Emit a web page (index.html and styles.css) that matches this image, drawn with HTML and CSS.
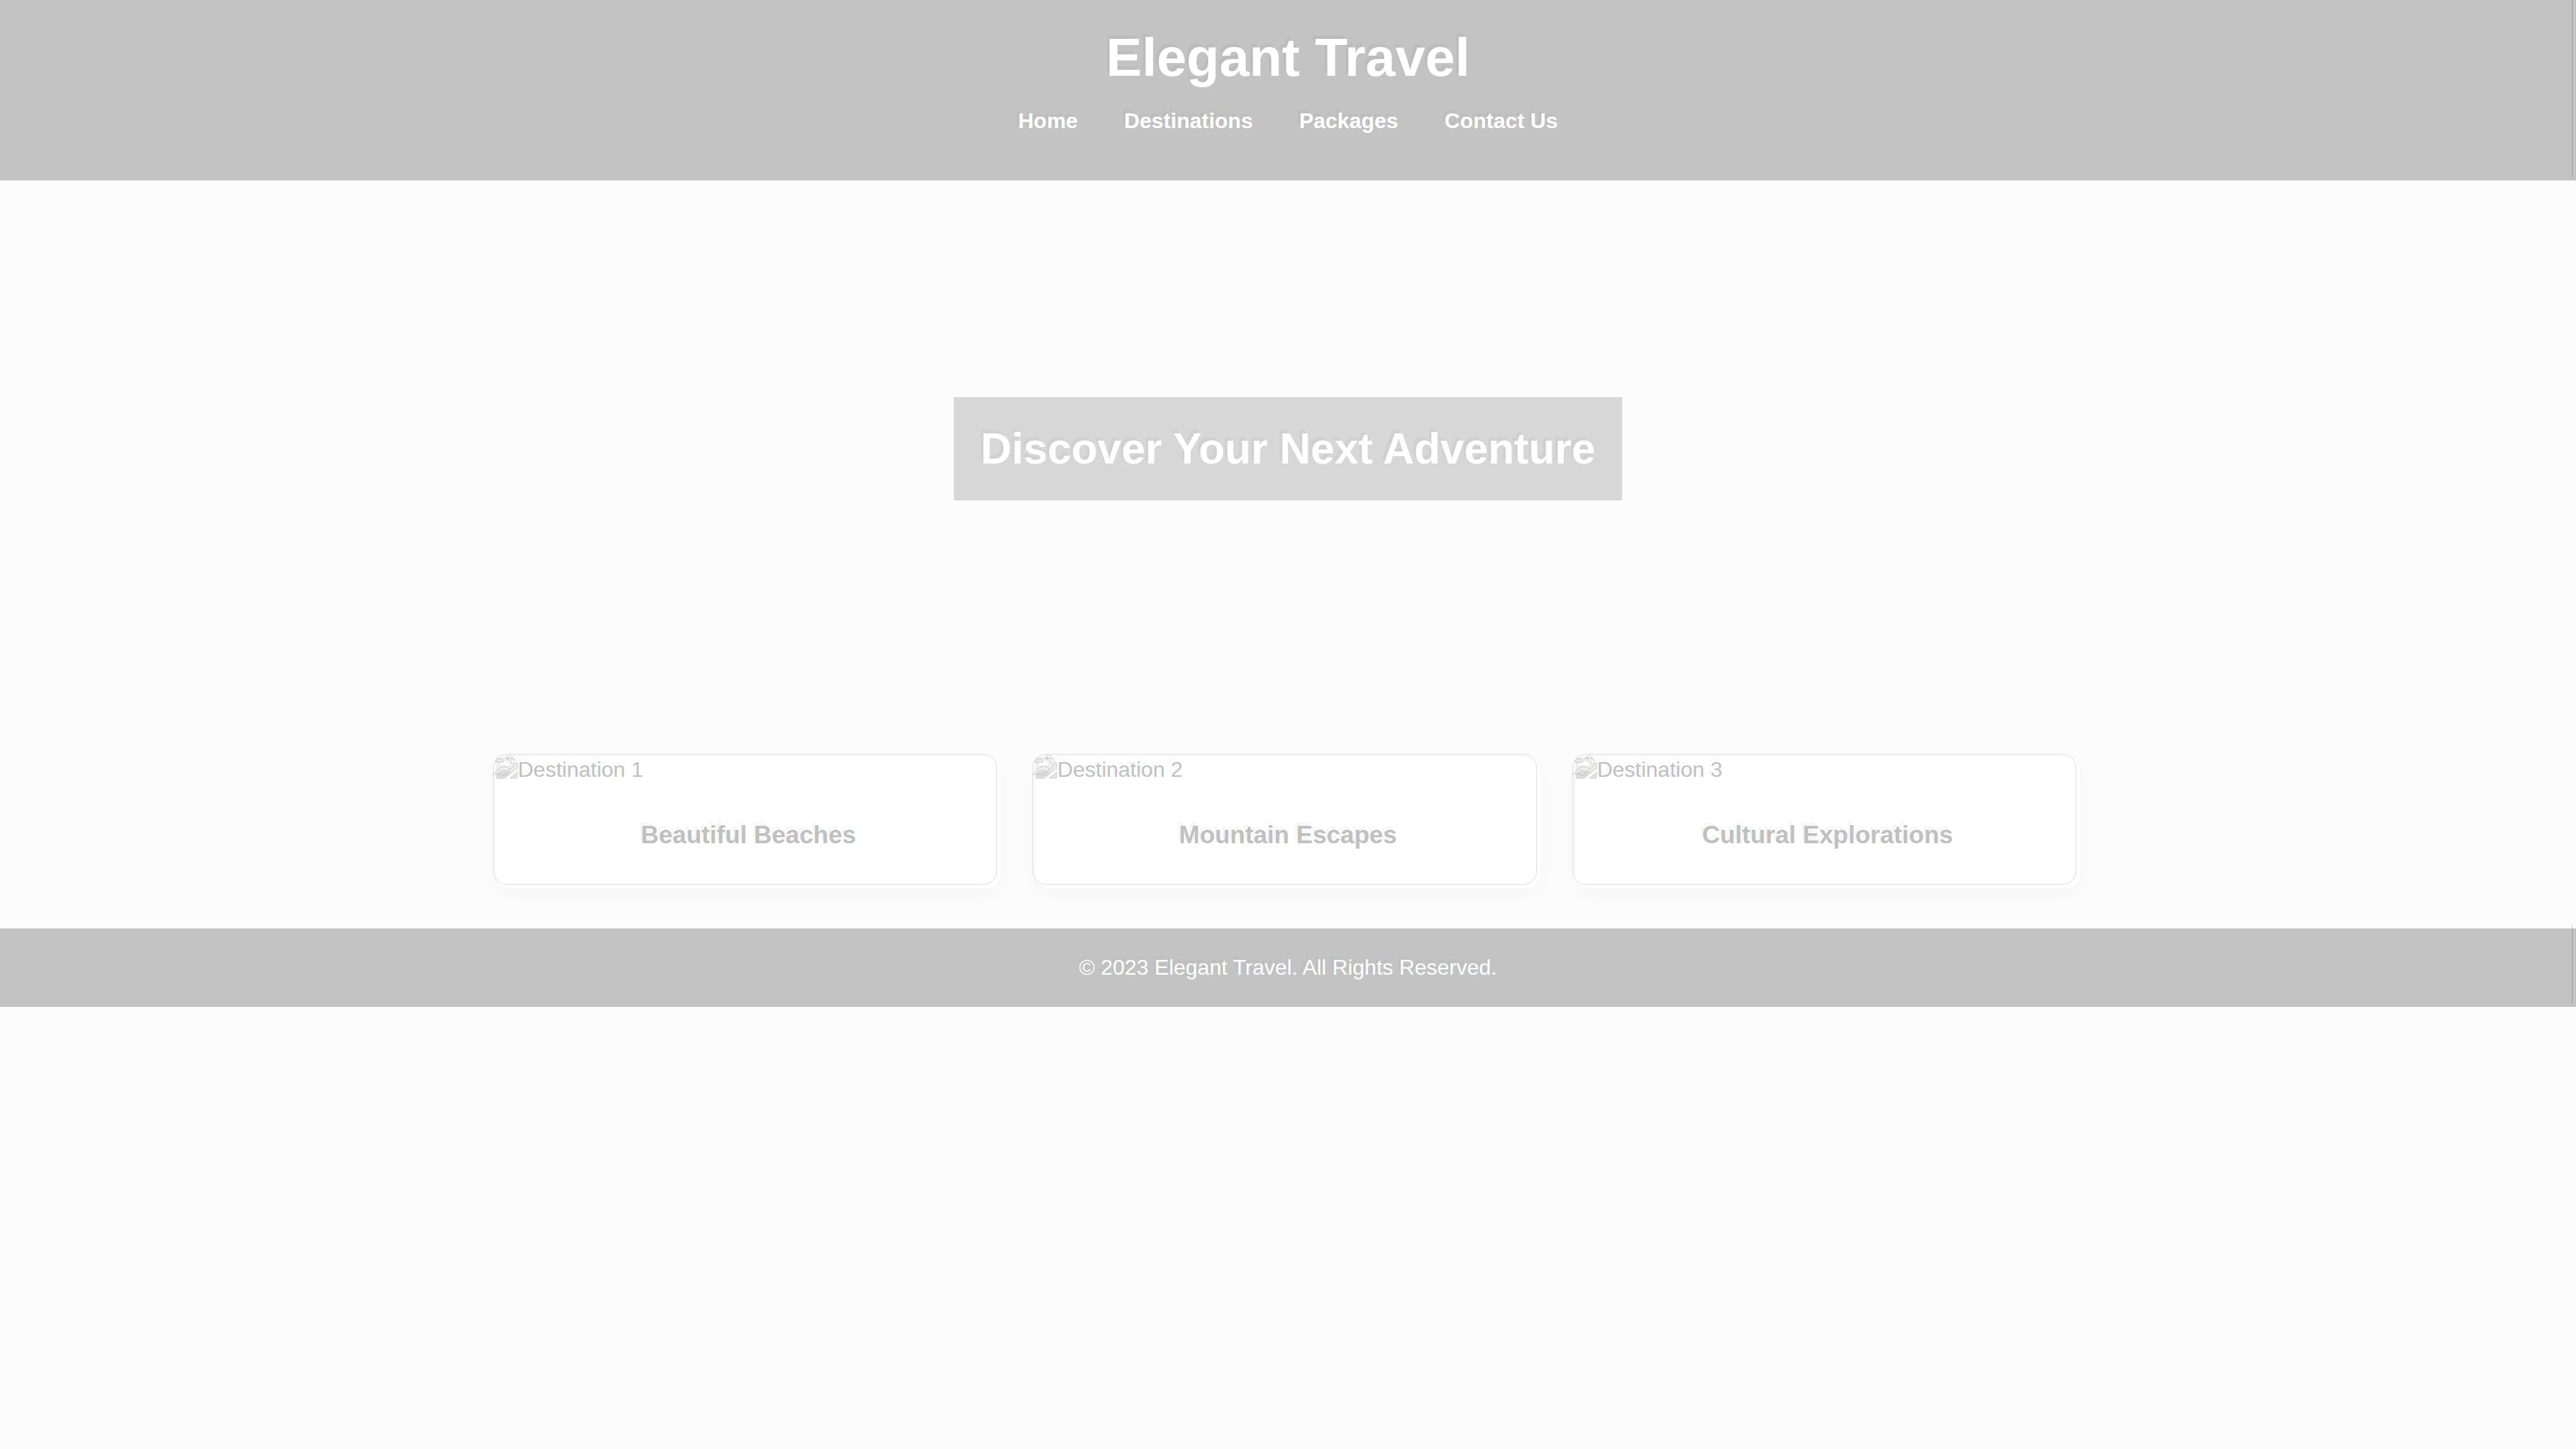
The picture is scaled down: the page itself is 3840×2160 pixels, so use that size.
FILE: index.html
```html
<!DOCTYPE html>
<html lang="en">
<head>
<meta charset="utf-8">
<title>Elegant Travel</title>
<link rel="stylesheet" href="styles.css">
</head>
<body>
<svg class="sprite" aria-hidden="true">
  <symbol id="photo" viewBox="0 0 32 32" overflow="visible">
    <path d="M0 0H22L31 9V18L14 32H0Z" fill="#efefef"/>
    <path d="M22 0V9H31Z" fill="#fafafa" stroke="#d0d0d0"/>
    <path d="M31 9V18" stroke="#d6d6d6"/>
    <path d="M4 12Q5 7 9 7Q12 3 16 7Q20 8 19 12Z" fill="#ffffff"/>
    <path d="M0 32V24Q9 14 21 22L12 32Z" fill="#dcdcdc"/>
    <path d="M20 31L31 22V31Z" fill="#e2e2e2" stroke="#d0d0d0"/>
    <g fill="none" stroke="#b4b4b4" stroke-dasharray="3 1">
      <path d="M-1 7Q0 2 5 2Q10 2 11 7Z"/>
      <path d="M13 1H20M17 -3V5M20 -4L28 4"/>
      <path d="M-2 23Q9 8 20 17M-6 25H8"/>
      <path d="M9 28L28 11M15 28L28 17"/>
    </g>
  </symbol>
</svg>
<header class="site-header">
  <h1 class="brand">Elegant Travel</h1>
  <nav class="nav">
    <a href="#home">Home</a>
    <a href="#destinations">Destinations</a>
    <a href="#packages">Packages</a>
    <a href="#contact">Contact Us</a>
  </nav>
</header>
<section class="hero" id="home">
  <h2 class="hero-title">Discover Your Next Adventure</h2>
</section>
<main class="cards" id="destinations">
  <article class="card">
    <div class="picture"><svg class="icon" aria-hidden="true"><use href="#photo"/></svg><span>Destination 1</span></div>
    <h3 class="card-title">Beautiful Beaches</h3>
  </article>
  <article class="card">
    <div class="picture"><svg class="icon" aria-hidden="true"><use href="#photo"/></svg><span>Destination 2</span></div>
    <h3 class="card-title">Mountain Escapes</h3>
  </article>
  <article class="card">
    <div class="picture"><svg class="icon" aria-hidden="true"><use href="#photo"/></svg><span>Destination 3</span></div>
    <h3 class="card-title">Cultural Explorations</h3>
  </article>
</main>
<footer class="site-footer" id="contact">
  <p class="copyright">© 2023 Elegant Travel. All Rights Reserved.</p>
</footer>
</body>
</html>
```
FILE: styles.css
```css
* { box-sizing: border-box; }

body {
  margin: 0;
  background: #fcfcfc;
  color: #c0c0c0;
  font-family: "Liberation Sans", Arial, sans-serif;
  font-size: 32px;
  line-height: 37px;
  text-shadow: -4px -5px 0 rgba(0, 0, 0, 0.03);
}

h1, h2, h3, p { margin: 0; }

.sprite {
  position: absolute;
  width: 0;
  height: 0;
}

.site-header,
.site-footer {
  position: relative;
  background: #c3c3c3;
  color: #ffffff;
  text-align: center;
}

.site-header { padding: 40px 40px 70px; }

.site-footer { padding: 40px; }

/* thin rule near the right edge of both bars */
.site-header::after,
.site-footer::after {
  content: "";
  position: absolute;
  top: -5px;
  right: 5px;
  bottom: 5px;
  width: 1px;
  background: rgba(0, 0, 0, 0.2);
}

.brand {
  font-size: 80px;
  line-height: 92px;
}

.nav {
  display: flex;
  justify-content: center;
  gap: 69px;
  margin-top: 30px;
}

.nav a {
  color: inherit;
  font-weight: bold;
  text-decoration: none;
}

.hero {
  display: flex;
  align-items: center;
  justify-content: center;
  min-height: 800px;
}

.hero-title {
  padding: 40px;
  background: #d7d7d7;
  color: #ffffff;
  font-size: 64px;
  line-height: 74px;
}

.cards {
  display: grid;
  grid-template-columns: repeat(3, 1fr);
  gap: 53px;
  max-width: 2440px;
  margin: 0 auto;
  padding: 60px 40px;
}

.card {
  position: relative;
  border-radius: 20px;
  background: #ffffff;
  box-shadow: 0 8px 32px rgba(0, 0, 0, 0.03);
}

/* hairline frame set up and to the left of the card */
.card::before {
  content: "";
  position: absolute;
  inset: -5px 5px 5px -5px;
  border: 1px solid #dedede;
  border-radius: 20px;
}

.picture { display: flex; }

.icon {
  width: 32px;
  height: 32px;
  overflow: visible;
}

.card-title {
  padding: 57px 40px 58px;
  font-size: 37px;
  line-height: 43px;
  text-align: center;
}
```
